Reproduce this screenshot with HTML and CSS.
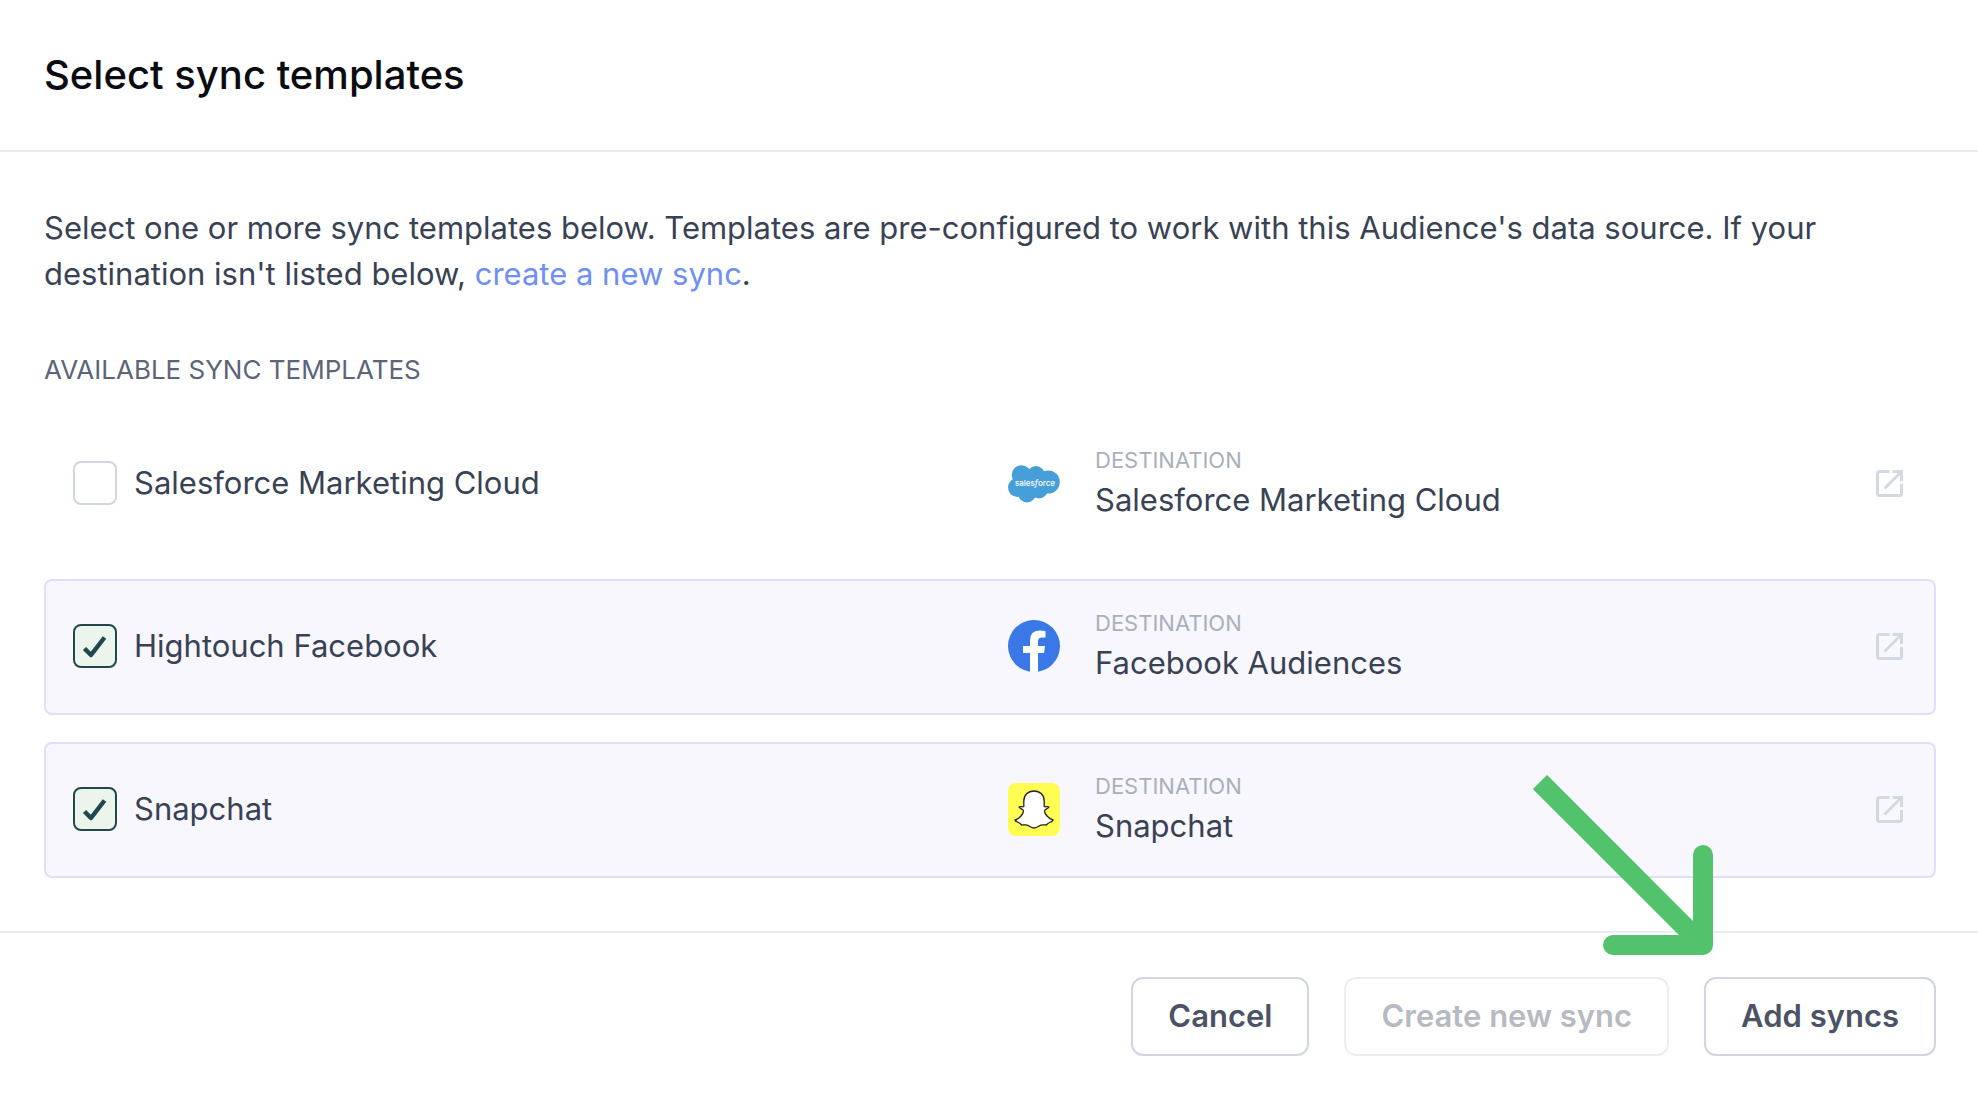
FILE: index.html
```html
<!DOCTYPE html>
<html lang="en">
<head>
<meta charset="utf-8">
<meta name="viewport" content="width=device-width, initial-scale=1">
<title>Select sync templates</title>
<link rel="stylesheet" href="styles.css">
</head>
<body>
<svg class="sprite" aria-hidden="true">
  <symbol id="open-icon" viewBox="0 0 27 27">
    <path d="M13.500 1.500H3.500Q1.500 1.500 1.500 3.500V23.500Q1.500 25.500 3.500 25.500H23.500Q25.500 25.500 25.500 23.500V14M16.500 1.500H25.500V11M25 2L8.500 18.500" fill="none" stroke="currentColor" stroke-width="3"/>
  </symbol>
</svg>
<main class="dialog">
  <header class="dialog-header">
    <h1 class="title">Select sync templates</h1>
  </header>
  <section class="dialog-body">
    <p class="intro">Select one or more sync templates below. Templates are pre-configured to work with this Audience's data source. If your destination isn't listed below, <a class="link" href="#new">create a new sync</a>.</p>
    <h2 class="section-label">AVAILABLE SYNC TEMPLATES</h2>
    <ul class="templates">
      <li class="template">
        <label class="choice"><input class="checkbox" type="checkbox"><span>Salesforce Marketing Cloud</span></label>
        <div class="destination">
          <svg class="logo" viewBox="0 0 52 52" role="img" aria-label="Salesforce">
            <g fill="#479fda"><circle cx="13.500" cy="18" r="9.800"/><circle cx="28" cy="18" r="9"/><circle cx="40.300" cy="25" r="11.500"/><circle cx="9.500" cy="30.500" r="9.500"/><circle cx="19" cy="36.500" r="9"/><circle cx="31" cy="32.500" r="9"/><path d="M10 16h30v18H10z"/></g>
            <text class="logo-text" x="27" y="29" text-anchor="middle">sales<tspan font-style="italic">f</tspan>orce</text>
          </svg>
          <div class="destination-text"><span class="caption">DESTINATION</span><span>Salesforce Marketing Cloud</span></div>
          <a class="open" href="#salesforce" aria-label="Open Salesforce Marketing Cloud"><svg class="open-icon"><use href="#open-icon"/></svg></a>
        </div>
      </li>
      <li class="template selected">
        <label class="choice"><input class="checkbox" type="checkbox" checked><span>Hightouch Facebook</span></label>
        <div class="destination">
          <svg class="logo" viewBox="0 0 52 52" role="img" aria-label="Facebook">
            <circle cx="26" cy="26" r="26" fill="#3b78e7"/>
            <path d="M22 51.700V33H15V26H22V20.500Q22 10.500 31.500 10.500Q34.500 10.500 37.500 11V17.500H34Q30 17.500 30 21.500V26H37L36 33H30V51.700Q26 52.300 22 51.700Z" fill="#fff"/>
          </svg>
          <div class="destination-text"><span class="caption">DESTINATION</span><span>Facebook Audiences</span></div>
          <a class="open" href="#facebook" aria-label="Open Hightouch Facebook"><svg class="open-icon"><use href="#open-icon"/></svg></a>
        </div>
      </li>
      <li class="template selected">
        <label class="choice"><input class="checkbox" type="checkbox" checked><span>Snapchat</span></label>
        <div class="destination">
          <svg class="logo" viewBox="0 0 52 52" role="img" aria-label="Snapchat">
            <rect width="52" height="53" rx="8" fill="#fffc54"/>
            <path d="M26 8C20 8 15.800 12 15.800 18V23.500C14.500 24.400 12.500 23 11 24C11 25.500 15.500 26 15.500 28C15.500 31 11 36 7 37C7.500 39.500 12.500 39 13.500 42C15.500 42 18.500 41 21 43C23 44.500 24.500 45 26 45C27.500 45 29 44.500 31 43C33.500 41 36.500 42 38.500 42C39.500 39 44.500 39.500 45 37C41 36 36.500 31 36.500 28C36.500 26 41 25.500 41 24C39.500 23 37.500 24.400 36.200 23.500V18C36.200 12 32 8 26 8Z" fill="#fff" stroke="#222" stroke-width="1.300" stroke-linejoin="round"/>
          </svg>
          <div class="destination-text"><span class="caption">DESTINATION</span><span>Snapchat</span></div>
          <a class="open" href="#snapchat" aria-label="Open Snapchat"><svg class="open-icon"><use href="#open-icon"/></svg></a>
        </div>
      </li>
    </ul>
  </section>
  <footer class="dialog-footer">
    <svg class="arrow" viewBox="0 0 180 180" aria-hidden="true"><path d="M7 7L170 170" /><path d="M170 80V170H80" stroke-linecap="round" stroke-linejoin="round"/></svg>
    <button class="button" type="button">Cancel</button>
    <button class="button" type="button" disabled>Create new sync</button>
    <button class="button" type="button">Add syncs</button>
  </footer>
</main>
</body>
</html>
```
FILE: styles.css
```css
* { box-sizing: border-box; }

body {
  margin: 0;
  background: #fff;
  color: #394254;
  font-family: Inter, "Liberation Sans", sans-serif;
  font-size: 31px;
  line-height: 46px;
}

.sprite { display: none; }

.dialog-header {
  padding: 50px 44px;
  border-bottom: 2px solid #e9ecf1;
}

.title {
  margin: 0;
  color: #0b0b12;
  font-size: 40px;
  font-weight: 500;
  line-height: 50px;
}

.dialog-body { padding: 53px 42px 53px 44px; }

.intro { margin: 0; }

.link {
  color: #6f8ff2;
  text-decoration: none;
}

.section-label {
  margin: 55px 0 28px;
  color: #5c6479;
  font-size: 26px;
  font-weight: 400;
  line-height: 36px;
}

.templates {
  display: grid;
  gap: 27px;
  margin: 0;
  padding: 0;
  list-style: none;
}

.template {
  display: grid;
  grid-template-columns: 1fr 1fr;
  gap: 40px;
  align-items: center;
  min-height: 136px;
  padding: 0 31px 2px 27px;
  border: 2px solid transparent;
  border-radius: 8px;
}

.selected {
  background: #f8f7fe;
  border-color: #e2defa;
}

.choice {
  display: flex;
  align-items: center;
  gap: 17px;
}

.checkbox {
  appearance: none;
  width: 44px;
  height: 44px;
  margin: 0;
  border: 2px solid #d0d5e0;
  border-radius: 8px;
  background: #fff;
}

.checkbox:checked {
  border-color: #20474f;
  background: #ebf5eb url("data:image/svg+xml,%3Csvg xmlns='http://www.w3.org/2000/svg' viewBox='0 0 40 40'%3E%3Cpath d='M9.500 22.500L16 29L29.500 11.500' fill='none' stroke='%2320474f' stroke-width='4.500' stroke-linejoin='round'/%3E%3C/svg%3E") center / 40px 40px no-repeat;
}

.destination {
  display: flex;
  align-items: center;
  gap: 35px;
}

.logo {
  width: 52px;
  height: 52px;
  overflow: visible;
}

.logo-text {
  fill: #fff;
  font-size: 8px;
  font-weight: 500;
}

.destination-text {
  display: grid;
  flex: 1;
}

.caption {
  color: #a9afbd;
  font-size: 22px;
  line-height: 34px;
}

.open {
  display: flex;
  color: #d2d9e2;
}

.open-icon {
  width: 27px;
  height: 27px;
}

.dialog-footer {
  position: relative;
  display: flex;
  justify-content: flex-end;
  gap: 35px;
  padding: 44px 42px;
  border-top: 2px solid #e9ecf1;
}

.button {
  padding: 14px 35px 15px;
  border: 2px solid #d0d5e0;
  border-radius: 12px;
  background: #fff;
  color: #4b5364;
  font: inherit;
  font-weight: 600;
}

.button:disabled {
  border-color: #ebeef2;
  color: #b7bac2;
}

.arrow {
  position: absolute;
  right: 265px;
  bottom: 145px;
  width: 180px;
  height: 180px;
  fill: none;
  stroke: #52c26c;
  stroke-width: 20px;
}
```
